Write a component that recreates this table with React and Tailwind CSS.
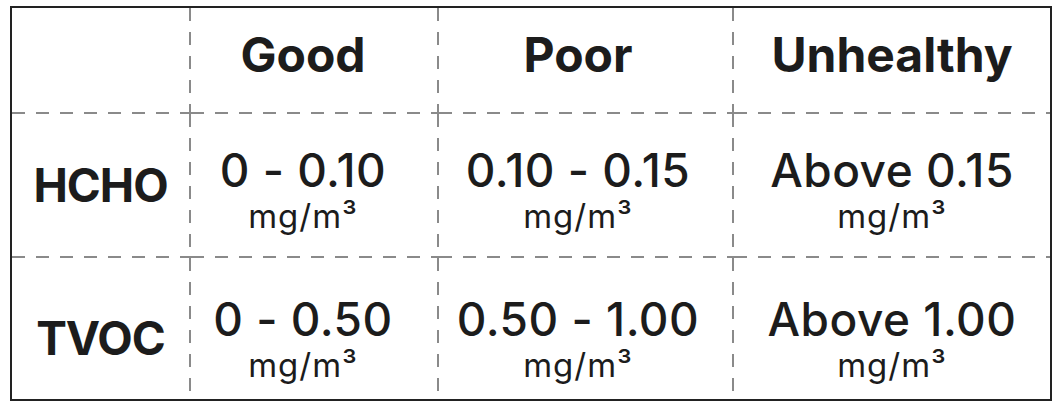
const rows = [
	{
		name: "HCHO",
		values: ["0 - 0.10", "0.10 - 0.15", "Above 0.15"],
	},
	{
		name: "TVOC",
		values: ["0 - 0.50", "0.50 - 1.00", "Above 1.00"],
	},
];

const headers = ["Good", "Poor", "Unhealthy"];

const VSep = () => (
	<div className="bg-[repeating-linear-gradient(to_bottom,#8a8a8a_0px,#8a8a8a_13px,transparent_13px,transparent_24px)]" />
);
const HSep = () => (
	<div className="bg-[repeating-linear-gradient(to_right,#8a8a8a_0px,#8a8a8a_13px,transparent_13px,transparent_24px)]" />
);
const Cross = () => <div className="bg-[#8a8a8a]" />;

const shift = ["pr-[22px]", "pr-[15px]", ""];

const Value = ({ text, pad }) => (
	<div className={`flex flex-col items-center justify-center ${pad}`}>
		<span className="text-[46px] font-medium leading-[46px] tracking-[0.5px]">{text}</span>
		<span className="mt-[4px] text-[33px] leading-[38px] tracking-[1px]">mg/m³</span>
	</div>
);

export default function App() {
	return (
		<div className="w-[1064px] h-[410px] bg-white pt-[6px] pl-[10px] text-[#1c1c1c] font-['Inter',sans-serif]">
			<div className="w-[1042px] h-[395px] border-2 border-[#222] grid grid-cols-[177px_2px_246px_2px_293px_2px_316px] grid-rows-[104px_2px_142px_2px_141px]">
				{/* header row */}
				<div />
				{headers.map((h, i) => (
					<div key={h} className="contents">
						<VSep />
						<div className={`flex items-center justify-center pb-[10px] text-[48px] font-bold ${shift[i]}`}>
							{h}
						</div>
					</div>
				))}

				{rows.map((row, r) => (
					<div key={row.name} className="contents">
						{/* divider row */}
						<HSep />
						<Cross />
						<HSep />
						<Cross />
						<HSep />
						<Cross />
						<HSep />

						<div className={`flex items-center justify-center text-[46px] font-bold tracking-[-1px] ${r === 1 ? "pt-[20px]" : ""}`}>
							{row.name}
						</div>
						{row.values.map((v, i) => (
							<div key={v} className="contents">
								<VSep />
								<Value text={v} pad={`${shift[i]} ${r === 1 ? "pt-[22px]" : "pt-[12px]"}`} />
							</div>
						))}
					</div>
				))}
			</div>
		</div>
	);
}
